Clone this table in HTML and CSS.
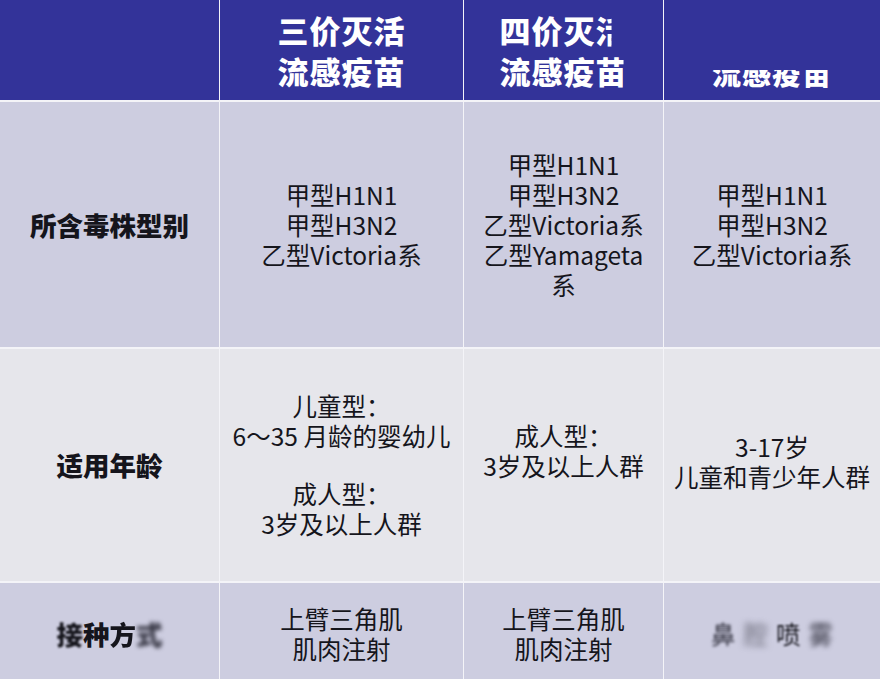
FILE: index.html
```html
<!DOCTYPE html>
<html lang="zh">
<head>
<meta charset="utf-8">
<link rel="stylesheet" href="styles.css">
</head>
<body>
<div class="table">
  <div class="cell head"></div>
  <div class="cell head"><div class="htxt">三价灭活<br>流感疫苗</div></div>
  <div class="cell head"><div class="htxt"><span class="clip1">四价灭活</span><br><span class="clip2">流感疫苗</span></div></div>
  <div class="cell head"><div class="htxt"><span class="ghost">流感疫苗</span><br><span class="cuttop">流感疫苗</span></div></div>

  <div class="cell r1 label"><div>所含毒株型别</div></div>
  <div class="cell r1"><div>甲型H1N1<br>甲型H3N2<br>乙型Victoria系</div></div>
  <div class="cell r1"><div>甲型H1N1<br>甲型H3N2<br>乙型Victoria系<br>乙型Yamageta<br>系</div></div>
  <div class="cell r1"><div>甲型H1N1<br>甲型H3N2<br>乙型Victoria系</div></div>

  <div class="cell r2 label"><div>适用年龄</div></div>
  <div class="cell r2"><div class="nowrap">儿童型：<br>6～35 月龄的婴幼儿<div class="gap"></div>成人型：<br>3岁及以上人群</div></div>
  <div class="cell r2"><div class="shift nowrap">成人型：<br>3岁及以上人群</div></div>
  <div class="cell r2"><div class="shift4 nowrap">3-17岁<br>儿童和青少年人群</div></div>

  <div class="cell r3 label"><div><span class="blur1">接</span>种<span class="blur2">方</span><span class="blur3">式</span></div></div>
  <div class="cell r3"><div>上臂三角肌<br>肌肉注射</div></div>
  <div class="cell r3"><div>上臂三角肌<br>肌肉注射</div></div>
  <div class="cell r3"><div class="blurtxt"><span class="b1">鼻</span><span class="b2">腔</span><span class="b3">喷</span><span class="b4">雾</span></div></div>
</div>
</body>
</html>
```

FILE: styles.css
```css
html, body {
  margin: 0;
  padding: 0;
  background: #ffffff;
  overflow: hidden;
}
body {
  width: 880px;
  height: 679px;
  font-family: "Noto Sans CJK SC", "Noto Sans", sans-serif;
  color: #15151c;
}
.table {
  display: grid;
  grid-template-columns: 219px 243px 199px 216px;
  grid-template-rows: 100px 245px 232px 102px;
  column-gap: 1px;
  row-gap: 2px;
  background: #f4f4f8;
}
.cell {
  display: flex;
  align-items: center;
  justify-content: center;
  text-align: center;
  font-size: 24.5px;
  line-height: 30px;
  overflow: hidden;
}
.nowrap {
  white-space: nowrap;
}
.head {
  background: #333399;
  color: #ffffff;
}
.htxt {
  font-size: 31px;
  line-height: 41px;
  font-weight: 900;
  letter-spacing: 1px;
  white-space: nowrap;
}
.clip1 {
  display: inline-block;
  clip-path: inset(0 16px 0 0);
}
.clip2 {
  display: inline-block;
  clip-path: inset(0 4px 0 0);
}
.ghost {
  visibility: hidden;
}
.cuttop {
  display: inline-block;
  font-size: 29px;
  clip-path: inset(45% 0 0 0);
  position: relative;
  top: 1px;
}
.r1, .r3 {
  background: #cdcde0;
}
.r2 {
  background: #e6e6eb;
}
.label {
  font-weight: 900;
  font-size: 26.5px;
}
.gap {
  height: 28px;
}
.shift {
  margin-top: -29px;
}
.shift4 {
  margin-top: -6px;
}
.blur1 {
  filter: blur(0.8px);
}
.blur2 {
  filter: blur(0.5px);
}
.blur3 {
  filter: blur(2px);
  color: #333340;
}
.blurtxt {
  letter-spacing: 8px;
  margin-left: 8px;
  white-space: nowrap;
}
.b1 {
  filter: blur(1.5px);
  color: #333340;
}
.b2 {
  filter: blur(3px);
  color: #6a6a78;
}
.b3 {
  filter: blur(1.2px);
}
.b4 {
  filter: blur(2.5px);
  color: #333340;
}
```
